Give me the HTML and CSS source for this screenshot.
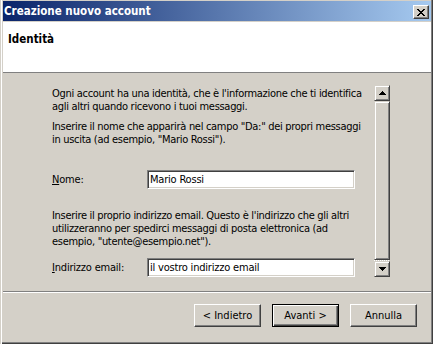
FILE: index.html
```html
<!DOCTYPE html>
<html lang="it">
<head>
    <meta charset="UTF-8">
    <meta name="viewport" content="width=device-width, initial-scale=1.0">
    <title>Creazione nuovo account</title>
    <link rel="stylesheet" href="styles.css">
</head>
<body>
    <div class="window">
        <div class="titlebar">
            <span class="title">Creazione nuovo account</span>
            <button class="close" title="Chiudi">
                <svg width="8" height="7" viewBox="0 0 8 7" shape-rendering="crispEdges">
                    <path d="M0 0h2v1H0zM6 0h2v1H6zM1 1h2v1H1zM5 1h2v1H5zM2 2h4v1H2zM3 3h2v1H3zM2 4h4v1H2zM1 5h2v1H1zM5 5h2v1H5zM0 6h2v1H0zM6 6h2v1H6z" fill="#000"/>
                </svg>
            </button>
        </div>

        <div class="header">
            <h1>Identità</h1>
        </div>

        <div class="main">
            <div class="content">
                <p class="p1">Ogni account ha una identità, che è l'informazione che ti identifica<br>agli altri quando ricevono i tuoi messaggi.</p>
                <p class="p2">Inserire il nome che apparirà nel campo "Da:" dei propri messaggi<br>in uscita (ad esempio, "Mario Rossi").</p>
                <div class="row row-name">
                    <label for="nome"><u>N</u>ome:</label>
                    <input type="text" id="nome" value="Mario Rossi">
                </div>
                <p class="p3">Inserire il proprio indirizzo email. Questo è l'indirizzo che gli altri<br>utilizzeranno per spedirci messaggi di posta elettronica (ad<br>esempio, "utente@esempio.net").</p>
                <div class="row row-email">
                    <label for="email"><u>I</u>ndirizzo email:</label>
                    <input type="text" id="email" value="il vostro indirizzo email">
                </div>
            </div>
            <div class="scrollbar">
                <div class="sb-btn">
                    <svg width="7" height="4" viewBox="0 0 7 4" shape-rendering="crispEdges">
                        <path d="M3 0h1v1h1v1h1v1h1v1H0V3h1V2h1V1h1z" fill="#000"/>
                    </svg>
                </div>
                <div class="sb-thumb"></div>
                <div class="sb-btn">
                    <svg width="7" height="4" viewBox="0 0 7 4" shape-rendering="crispEdges">
                        <path d="M0 0h7v1H6v1H5v1H4v1H3V3H2V2H1V1H0z" fill="#000"/>
                    </svg>
                </div>
            </div>
        </div>

        <div class="footer">
            <button class="btn">&lt; Indietro</button>
            <button class="btn default">Avanti &gt;</button>
            <button class="btn">Annulla</button>
        </div>
    </div>
</body>
</html>
```

FILE: styles.css
```css
body {
    margin: 0;
    font-family: "DejaVu Sans Condensed", "Liberation Sans", sans-serif;
    font-size: 11px;
    color: #000;
    background-color: #d4d0c8;
}
.window {
    width: 433px;
    height: 344px;
    box-sizing: border-box;
    padding: 1px 2px 2px 3px;
    background-color: #d4d0c8;
    box-shadow: inset 1px 0 #d4d0c8, inset 2px 0 #fff, inset -1px -1px #404040, inset -2px -2px #808080;
    display: flex;
    flex-direction: column;
}
.titlebar {
    height: 20px;
    display: flex;
    align-items: center;
    justify-content: space-between;
    padding: 0 2px 0 1px;
    background: linear-gradient(to right, #0a246a, #a6caf0);
}
.title {
    color: #fff;
    font-weight: bold;
    font-size: 11.5px;
}
.close {
    width: 16px;
    height: 14px;
    margin-top: 2px;
    padding: 0;
    display: flex;
    align-items: center;
    justify-content: center;
    background-color: #d4d0c8;
    border: 1px solid;
    border-color: #fff #404040 #404040 #fff;
    box-shadow: inset -1px -1px #808080;
}
.header {
    margin-top: 1px;
    height: 51px;
    box-sizing: border-box;
    padding: 11px 5px 0;
    background-color: #fff;
    border-bottom: 1px solid #808080;
}
h1 {
    margin: 0;
    font-size: 11.5px;
    line-height: 13px;
    font-weight: bold;
}
.main {
    height: 219px;
    box-sizing: border-box;
    display: flex;
    align-items: flex-start;
    padding: 12px 0 0 49px;
    border-bottom: 1px solid #808080;
    box-shadow: 0 1px #fff;
}
.content {
    width: 316px;
    padding-top: 2px;
}
p {
    margin: 0;
    line-height: 13px;
    white-space: nowrap;
    letter-spacing: -0.3px;
}
.p2 {
    margin-top: 7px;
}
.p3 {
    margin-top: 20px;
}
.row {
    display: flex;
    align-items: center;
}
.row-name {
    margin-top: 24px;
}
.row-email {
    margin-top: 10px;
}
label {
    width: 95px;
    letter-spacing: -0.2px;
}
input {
    width: 208px;
    height: 19px;
    box-sizing: border-box;
    padding: 0 2px;
    font-family: inherit;
    font-size: 11px;
    letter-spacing: -0.2px;
    color: #000;
    background-color: #fff;
    border: 1px solid;
    border-color: #808080 #fff #fff #808080;
    box-shadow: inset 1px 1px #404040, inset -1px -1px #d4d0c8;
    outline: none;
}
.scrollbar {
    width: 16px;
    height: 192px;
    margin-left: 6px;
    display: flex;
    flex-direction: column;
    background: repeating-conic-gradient(#fff 0 25%, #d4d0c8 0 50%) 0 0 / 2px 2px;
}
.sb-btn, .sb-thumb {
    box-sizing: border-box;
    background-color: #d4d0c8;
    border: 1px solid;
    border-color: #d4d0c8 #404040 #404040 #d4d0c8;
    box-shadow: inset 1px 1px #fff, inset -1px -1px #808080;
}
.sb-btn {
    height: 16px;
    display: flex;
    align-items: center;
    justify-content: center;
}
.sb-thumb {
    flex: 1;
    margin-bottom: 1px;
}
.footer {
    flex: 1;
    display: flex;
    justify-content: flex-end;
    align-items: flex-start;
    gap: 11px;
    padding: 12px 14px 0 0;
}
.btn {
    width: 67px;
    height: 23px;
    padding: 0;
    font-family: inherit;
    font-size: 11px;
    color: #000;
    background-color: #d4d0c8;
    border: 1px solid;
    border-color: #fff #404040 #404040 #fff;
    box-shadow: inset -1px -1px #808080, inset 1px 1px #d4d0c8;
}
.btn.default {
    border-color: #000;
    box-shadow: inset 1px 1px #fff, inset -1px -1px #404040, inset -2px -2px #808080;
}
```
